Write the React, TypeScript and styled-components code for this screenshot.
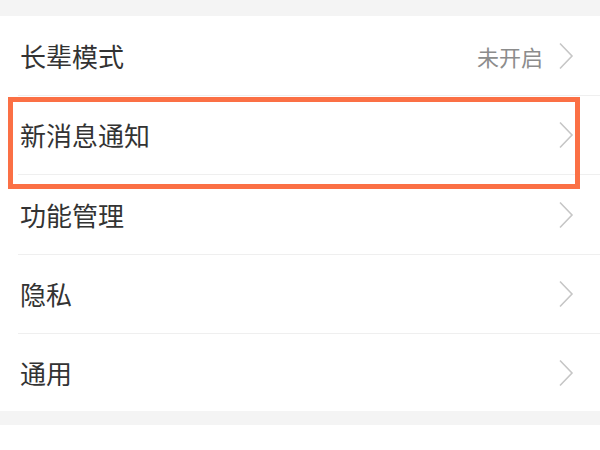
import React from 'react'
import styled, { createGlobalStyle } from 'styled-components'

const GlobalStyle = createGlobalStyle`
  html, body {
    margin: 0;
    padding: 0;
    background: #ffffff;
  }
  body {
    font-family: "Noto Sans CJK SC", "Noto Sans", sans-serif;
  }
`

const Page = styled.div`
  width: 600px;
  height: 450px;
  overflow: hidden;
  background: #ffffff;
  display: flex;
  flex-direction: column;
`

const Band = styled.div<{ h: number }>`
  height: ${p => p.h}px;
  flex-shrink: 0;
  background: #f4f4f4;
`

const Card = styled.div`
  background: #ffffff;
  display: flex;
  flex-direction: column;
`

const Row = styled.div<{ h: number; last?: boolean }>`
  position: relative;
  height: ${p => p.h}px;
  padding-left: 20px;
  padding-right: 26px;
  display: flex;
  align-items: center;
  border-bottom: ${p => (p.last ? 'none' : '1px solid transparent')};
  &::after {
    content: '';
    display: ${p => (p.last ? 'none' : 'block')};
    position: absolute;
    left: 18px;
    right: 0;
    bottom: -1px;
    height: 1px;
    background: #efefef;
  }
`

const Label = styled.span`
  flex: 1;
  font-size: 26px;
  color: #333333;
  line-height: 1;
`

const Value = styled.span`
  font-size: 22px;
  color: #8c8c8c;
  line-height: 1;
  margin-right: 15px;
`

const Highlight = styled.div`
  position: absolute;
  left: 8px;
  top: 1px;
  width: 572px;
  height: 92px;
  box-sizing: border-box;
  border: 5px solid #fb7045;
  pointer-events: none;
  z-index: 2;
`

const Chevron = () => (
  <svg width="16" height="28" viewBox="0 0 16 28" fill="none">
    <path d="M2 1.5 L14 14 L2 26.5" stroke="#c6c6c6" strokeWidth="1.6" />
  </svg>
)

type Item = {
  label: string
  value?: string
  highlighted?: boolean
  h: number
}

const items: Item[] = [
  { label: '长辈模式', value: '未开启', h: 79 },
  { label: '新消息通知', highlighted: true, h: 78 },
  { label: '功能管理', h: 79 },
  { label: '隐私', h: 78 },
  { label: '通用', h: 77 },
]

const App = () => {
  return (
    <Page>
      <GlobalStyle />
      <Band h={16} />
      <Card>
        {items.map((item, i) => (
          <Row key={item.label} h={item.h} last={i === items.length - 1}>
            <Label>{item.label}</Label>
            {item.value && <Value>{item.value}</Value>}
            <Chevron />
            {item.highlighted && <Highlight />}
          </Row>
        ))}
      </Card>
      <Band h={14} />
    </Page>
  )
}

export default App
